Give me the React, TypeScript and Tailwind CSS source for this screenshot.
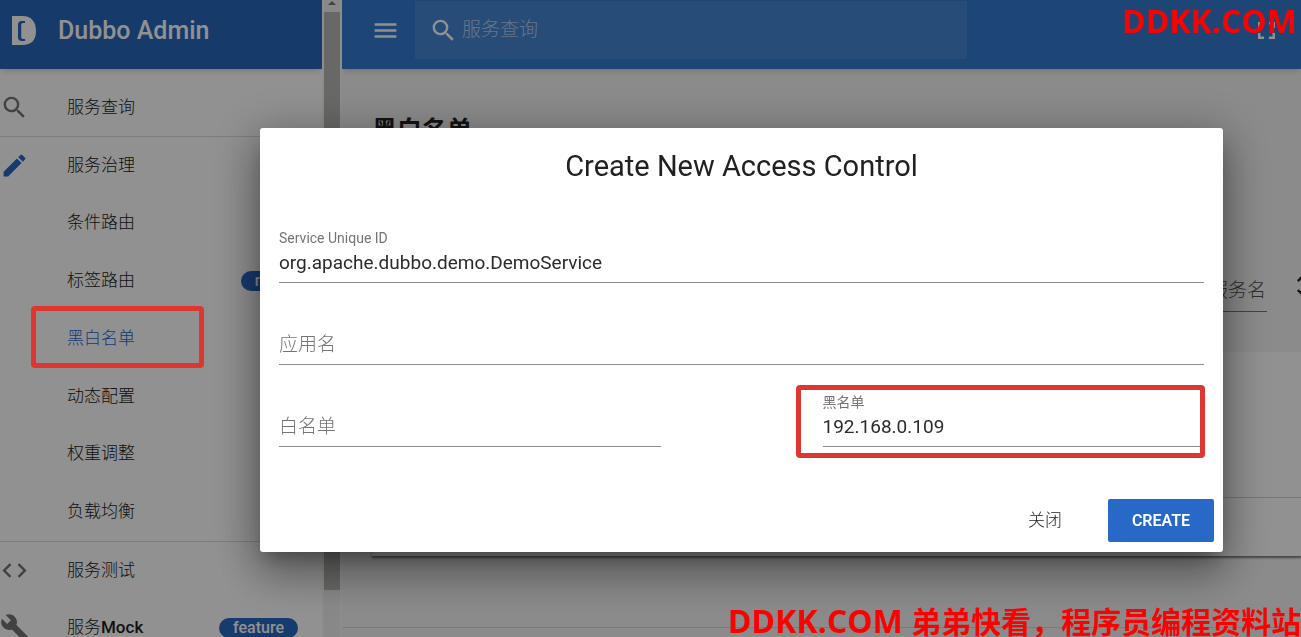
import { useState } from "react";
import { MdBuild, MdCode, MdEdit, MdFullscreen, MdMenu, MdSearch, MdUnfoldMore } from "react-icons/md";

const governance = [
  { title: "条件路由" },
  { title: "标签路由", badge: "new" },
  { title: "黑白名单", active: true },
  { title: "动态配置" },
  { title: "权重调整" },
  { title: "负载均衡" },
];

const Logo = () => (
  <svg viewBox="0 0 26 30" className="h-[30px] w-[26px]" aria-hidden="true">
    <path
      fill="#fff"
      fillRule="evenodd"
      d="M1 0h10.500c9 0 13.500 6 13.500 15s-4.500 14-13.500 14H1zM14 5h-3C8 5 7 6.200 7 9v12c0 2.800 1 4 4 4h3v-2h-1.400c-1.800 0-2.400-.6-2.400-2.400V9.400C10.200 7.600 10.800 7 12.600 7H14z"
    />
  </svg>
);

const Badge = ({ text }: { text: string }) => (
  <span className="rounded-full bg-[#2768c4] px-[14px] text-base leading-5 font-medium text-white">
    {text}
  </span>
);

const NavItem = ({
  title,
  icon,
  badge,
  active,
}: {
  title: React.ReactNode;
  icon?: React.ReactNode;
  badge?: string;
  active?: boolean;
}) => (
  <a href="#" className="relative flex min-h-[57px] items-center pr-6 text-[17px] font-light">
    <span className="w-[67px] shrink-0 text-[29px] text-[#757575]">{icon}</span>
    <span className={active ? "flex-1 text-[#1e68d0]" : "flex-1 text-[#212121]"}>{title}</span>
    {badge && <Badge text={badge} />}
    {active && (
      <span className="absolute -top-1 left-[31px] z-30 h-[62px] w-[173px] rounded-sm border-[5px] border-[#dd3730]" />
    )}
  </a>
);

const Sidebar = () => (
  <aside className="flex w-[342px] shrink-0 bg-white">
    <div className="w-[322px]">
      <div className="flex h-[69px] items-center gap-[21px] bg-[#2766ba] pb-2 pl-[11px] shadow-md">
        <Logo />
        <span className="text-[25px] font-medium text-white">Dubbo Admin</span>
      </div>
      <nav className="pt-[10px]">
        <NavItem title="服务查询" icon={<MdSearch />} />
        <div className="border-t border-[#dcdcdc]">
          <NavItem title="服务治理" icon={<MdEdit className="text-[#2768c4]" />} />
          <div className="grid h-[347px] grid-rows-6">
            {governance.map((item) => (
              <NavItem key={item.title} {...item} />
            ))}
          </div>
        </div>
        <div className="border-t border-[#dcdcdc]">
          <NavItem title="服务测试" icon={<MdCode />} />
          <NavItem
            title={
              <>
                服务<span className="font-medium">Mock</span>
              </>
            }
            icon={<MdBuild />}
            badge="feature"
          />
        </div>
      </nav>
    </div>
    <div className="flex w-5 flex-col items-center border-x-2 border-[#f8f8f8] bg-[#f0f0f0]">
      <svg viewBox="0 0 10 12" className="h-3 w-[10px]" aria-hidden="true">
        <path d="M1 5l4-4 4 4z" fill="#777" />
      </svg>
      <div className="h-[578px] w-full bg-[#b8b8b5]" />
    </div>
  </aside>
);

const Main = () => (
  <div className="flex min-w-0 flex-1 flex-col overflow-hidden bg-[#f5f5f5]">
    <header className="flex h-[69px] shrink-0 items-start bg-[#3379cf] pr-5 pl-[29px] text-[29px] text-white shadow-md">
      <button type="button" aria-label="menu" className="mt-4">
        <MdMenu />
      </button>
      <label className="mt-px ml-[15px] flex h-[58px] w-full max-w-[552px] items-center gap-1 bg-white/10 pl-[14px]">
        <MdSearch className="shrink-0" />
        <input
          aria-label="服务查询"
          placeholder="服务查询"
          className="w-full text-[19px] font-light outline-none placeholder:text-white/60"
        />
      </label>
      <button type="button" aria-label="fullscreen" className="mt-4 ml-auto">
        <MdFullscreen />
      </button>
    </header>

    <main className="pl-[30px]">
      <h1 className="pt-11 text-[25px] leading-9 font-bold text-[#212121]">黑白名单</h1>
      <section className="mt-[58px] w-full bg-white shadow-[0_2px_2px_rgba(0,0,0,0.5)]">
        <div className="flex h-[145px] items-center justify-end gap-[21px] bg-[#f5f5f5] pt-5">
          <select
            aria-label="服务名"
            className="h-11 w-[90px] appearance-none border-b border-[#777] pt-1 pl-[32px] text-[19px] font-light text-[#555]"
          >
            <option>服务名</option>
          </select>
          <MdUnfoldMore className="-mt-2 -mr-4 shrink-0 text-[29px] text-[#212121]" />
        </div>
        <div className="h-[146px] border-b border-[#d0d0d0]" />
        <div className="h-[58px]" />
      </section>
    </main>
    <footer className="mt-[71px] border-t border-[#d8d8d8]" />
  </div>
);

const Field = ({ label, initial = "" }: { label: string; initial?: string }) => {
  const [value, setValue] = useState(initial);
  return (
    <label className="block text-sm leading-5 text-[#757575]">
      <span className="block h-5">{initial && label}</span>
      <input
        aria-label={label}
        placeholder={label}
        value={value}
        onChange={(e) => setValue(e.target.value)}
        className="block h-[35px] w-full border-b border-[#8c8c8c] pb-[5px] text-[19px] text-[#2b2b2b] outline-none placeholder:font-light placeholder:text-[#757575]"
      />
    </label>
  );
};

const AccessDialog = () => (
  <div className="fixed inset-0 z-20 flex items-start pt-32 pr-[78px] pl-[260px]">
    <form
      role="dialog"
      aria-labelledby="dialog-title"
      className="w-full rounded-[3px] bg-white shadow-[0_11px_18px_-7px_rgba(0,0,0,0.3),0_24px_44px_3px_rgba(0,0,0,0.24),0_6px_46px_8px_rgba(0,0,0,0.22)]"
    >
      <h2 id="dialog-title" className="pt-5 text-center text-[29px] leading-9 text-[#212121]">
        Create New Access Control
      </h2>
      <div className="flex flex-col gap-[27px] px-[19px] pt-11">
        <Field label="Service Unique ID" initial="org.apache.dubbo.demo.DemoService" />
        <Field label="应用名" />
        <div className="grid grid-cols-2 gap-[162px]">
          <Field label="白名单" />
          <div className="relative">
            <Field label="黑名单" initial="192.168.0.109" />
            <span className="pointer-events-none absolute -top-[7px] -right-px -bottom-[11px] -left-[27px] rounded-sm border-[5px] border-[#dd3730]" />
          </div>
        </div>
      </div>
      <div className="flex justify-end gap-[10px] px-[9px] pt-[52px] pb-[10px] text-[17px]">
        <button type="button" className="h-[43px] w-[106px] font-light text-[#212121]">
          关闭
        </button>
        <button type="button" className="h-[43px] w-[106px] rounded-xs bg-[#2869c8] text-base font-semibold text-white">
          CREATE
        </button>
      </div>
    </form>
  </div>
);

const App = () => {
  return (
    <div className="relative flex h-screen overflow-hidden font-[Roboto,'Noto_Sans_CJK_SC',sans-serif]">
      <Sidebar />
      <Main />
      <div className="fixed inset-0 z-10 bg-black/43" />
      <AccessDialog />
      <div className="pointer-events-none fixed inset-0 z-40 flex flex-col items-end justify-between font-['Open_Sans','Noto_Sans_CJK_SC',sans-serif] text-[32px] leading-[42px] font-bold text-[#ff0000]">
        <p className="pr-1">DDKK.COM</p>
        <p className="-mb-[6px] whitespace-nowrap">
          DDKK.COM <span className="text-[30px]">弟弟快看，程序员编程资料站</span>
        </p>
      </div>
    </div>
  );
};

export default App;
